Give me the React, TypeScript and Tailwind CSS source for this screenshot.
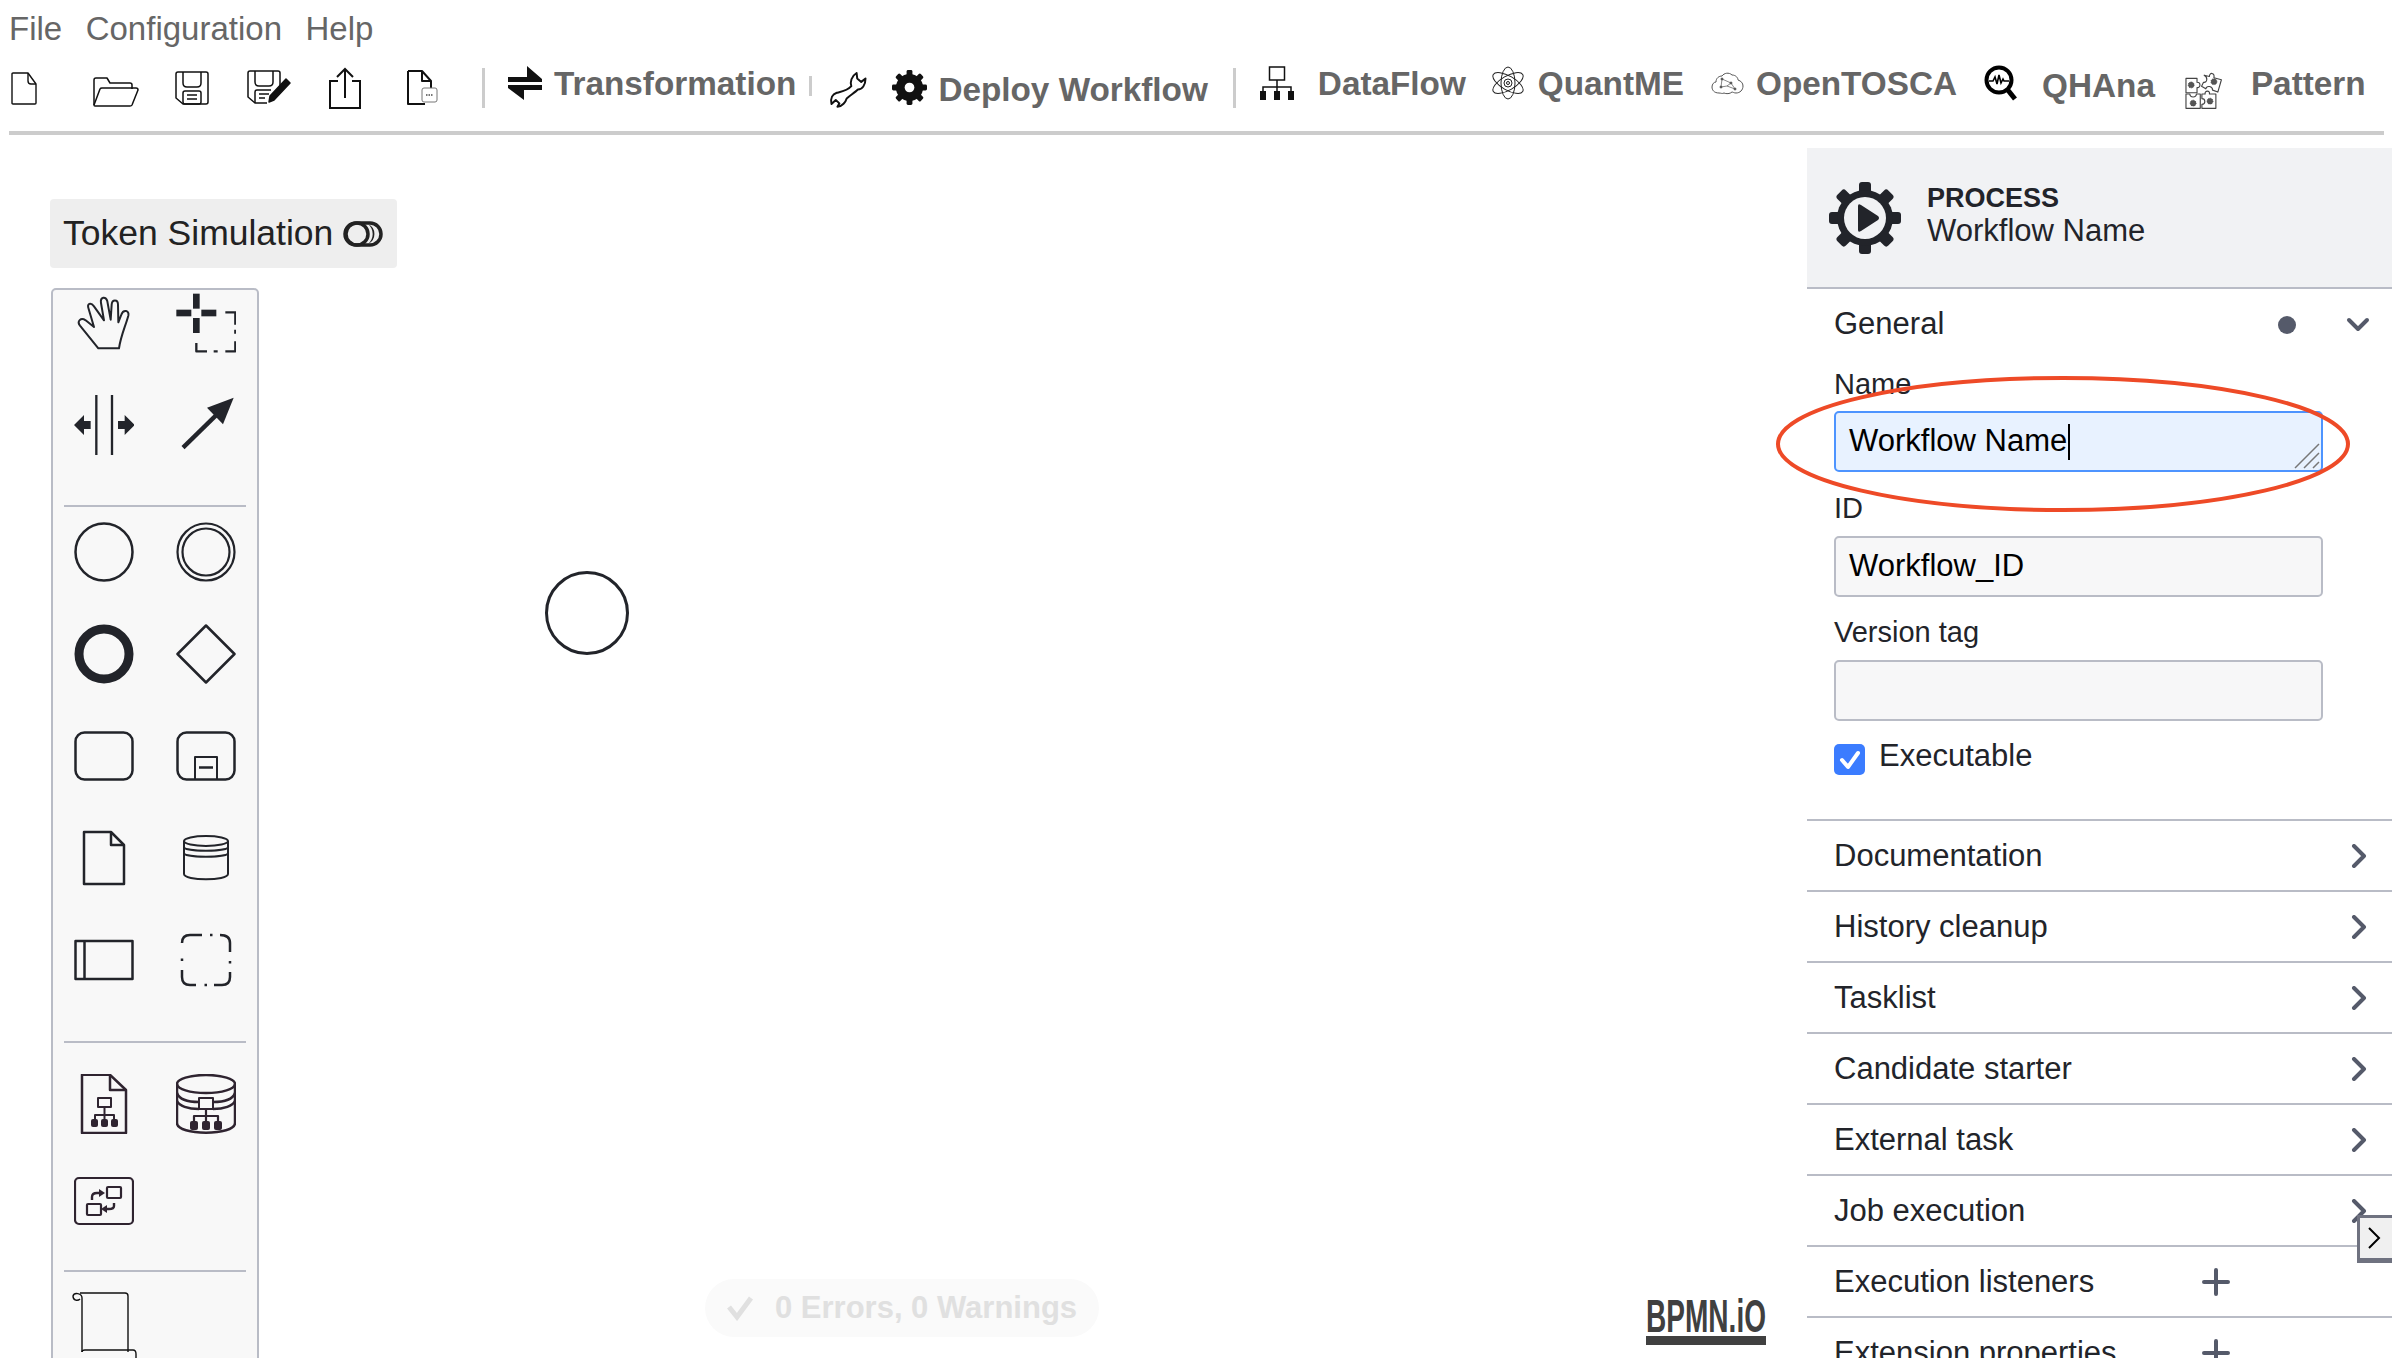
const Gear = ({ size, color, hole, bg, children }: { size: number; color: string; hole: number; bg: string; children?: React.ReactNode }) => (
  <svg width={size} height={size} viewBox="0 0 72 72">
    {[0, 45, 90, 135, 180, 225, 270, 315].map((a) => (
      <rect key={a} x="30" y="0" width="12" height="16" rx="3" fill={color} transform={`rotate(${a} 36 36)`} />
    ))}
    <circle cx="36" cy="36" r="28" fill={color} />
    <circle cx="36" cy="36" r={hole} fill={bg} />
    {children}
  </svg>
)

const stroke = "#22242a"
const dark = "#2f2430"

const Sep = ({ className }: { className: string }) => <div className={`w-[3px] bg-[#cccccc] ${className}`} />

const Tool = ({ className, children }: { className: string; children: React.ReactNode }) => (
  <span className={`text-[33.3px] leading-none font-bold text-[#666666] whitespace-nowrap ${className}`}>{children}</span>
)

const Toolbar = () => (
  <div className="flex items-center h-[64px] pl-[11px]">
    <svg width="26" height="33" viewBox="0 0 26 33" fill="none" stroke="#111" strokeWidth="1.4" strokeLinejoin="round">
      <path d="M1 2q0-1 1-1h15l8 11v19q0 1-1 1H2q-1 0-1-1z" />
      <path d="M17 1v8q0 3 3 3h5" />
    </svg>
    <svg className="ml-[56px] mt-[8px]" width="46" height="30" viewBox="0 0 46 30" fill="none" stroke="#111" strokeWidth="1.5" strokeLinejoin="round">
      <path d="M1 28V3q0-2 2-2h11l3 5h20q2 0 2 2v4" />
      <path d="M1 28l6-16q.5-1 2-1h34q2 0 2 2l-6 15q-.5 1-2 1H2q-1 0-1-1z" />
    </svg>
    <svg className="ml-[36px]" width="34" height="34" viewBox="0 0 34 34" fill="none" stroke="#111" strokeWidth="1.5" strokeLinejoin="round">
      <path d="M1 3q0-2 2-2h28q2 0 2 2v28q0 2-2 2H8l-7-6z" />
      <path d="M8 1v11q0 4 4 4h10q4 0 4-4V1" />
      <rect x="8" y="20" width="18" height="13" rx="2" />
      <path d="M12 24h10M12 28h10" />
    </svg>
    <svg className="ml-[38px]" width="44" height="36" viewBox="0 0 44 36" fill="none" stroke="#111" strokeWidth="1.5" strokeLinejoin="round">
      <path d="M1 3q0-2 2-2h28q2 0 2 2v17M20 33H8l-7-6V3" />
      <path d="M8 1v11q0 4 4 4h10q4 0 4-4V1" />
      <path d="M8 33V22q0-2 2-2h14" />
      <path d="M12 24h10M12 28h6" />
      <path d="M22 32l1-6 16-17 4 4-16 17z" fill="#111" />
    </svg>
    <svg className="ml-[37px]" width="34" height="42" viewBox="0 0 34 42" fill="none" stroke="#111" strokeWidth="2">
      <path d="M10 14H2v27h30V14h-8" />
      <path d="M17 31V2M9 10l8-8 8 8" />
    </svg>
    <svg className="ml-[45px]" width="31" height="36" viewBox="0 0 31 36" fill="none" stroke="#111" strokeWidth="2" strokeLinejoin="round">
      <path d="M1 1h14l9 10v7M18 34H1V1" />
      <path d="M15 1v10h9" />
      <rect x="15" y="18" width="15" height="14" rx="2" fill="#fff" stroke="#777" strokeWidth="1" />
      <path d="M19 25h7" stroke="#777" strokeWidth="2" strokeDasharray="1.5 1" />
    </svg>
    <Sep className="ml-[44px] h-[40px]" />
    <svg className="ml-[23px] mb-[10px]" width="35" height="34" viewBox="0 0 35 34" fill="#111">
      <polygon points="0,11 19,11 19,0 34,13 34,16 0,16" />
      <polygon points="34,19 34,24 16,24 16,34 0,22 0,19" />
    </svg>
    <Tool className="ml-[11px] mb-[8px]">Transformation</Tool>
    <Sep className="ml-[13px] h-[20px] mb-[4px]" />
    <svg className="ml-[17px] mt-[2px]" width="38" height="37" viewBox="25 22 114 112" fill="none" stroke="#111" strokeWidth="6" strokeLinejoin="round">
      <path d="M108 28C92 38 88 55 92 68C80 82 60 85 48 88C35 92 28 105 32 122L45 110L56 120L50 130C65 130 75 115 78 105C90 95 105 85 112 78C125 78 135 65 135 45L122 55L110 45Z" />
    </svg>
    <div className="ml-[25px] flex mt-[-2px]">
      <Gear size={35} color="#111" hole={10} bg="#fff" />
    </div>
    <Tool className="ml-[11px] mt-[4px]">Deploy Workflow</Tool>
    <Sep className="ml-[25px] h-[40px]" />
    <svg className="ml-[24px] mb-[10px]" width="34" height="34" viewBox="0 0 34 34" fill="none" stroke="#111" strokeWidth="1.5">
      <rect x="9.5" y="1" width="15" height="13" />
      <path d="M17 14v7M3 27v-6h28v6M17 21v6" />
      <rect x="0" y="25" width="6" height="9" fill="#111" stroke="none" />
      <rect x="14" y="25" width="6" height="9" fill="#111" stroke="none" />
      <rect x="28" y="25" width="6" height="9" fill="#111" stroke="none" />
    </svg>
    <Tool className="ml-[24px] mb-[8px]">DataFlow</Tool>
    <svg className="ml-[26px] mb-[10px]" width="32" height="34" viewBox="0 0 32 34" fill="none" stroke="#222" strokeWidth="1">
      <ellipse cx="16" cy="17" rx="7" ry="16" />
      <ellipse cx="16" cy="17" rx="7" ry="17" transform="rotate(60 16 17)" />
      <ellipse cx="16" cy="17" rx="7" ry="17" transform="rotate(-60 16 17)" />
      <circle cx="16" cy="17" r="4" />
      <circle cx="16" cy="17" r="1.5" />
    </svg>
    <Tool className="ml-[14px] mb-[8px]">QuantME</Tool>
    <svg className="ml-[27px] mb-[10px]" width="33" height="24" viewBox="0 0 33 24" fill="none" stroke="#555" strokeWidth="1">
      <path d="M8 22C3 22 1 19 1 16c0-3 2-5 4-5 0-4 3-6 6-6 2-3 7-4 10-1 4 0 6 3 6 5 3 1 5 3 5 6 0 4-3 7-7 7-2 0-3-1-4-1-2 2-6 2-8 1-2 1-3 0-5 0z" />
      <path d="M11 8l9 4 4 6M11 8l-1 8 6-1 4-3M16 15l8 3" strokeWidth=".7" />
      <circle cx="11" cy="8" r="1" fill="#555" />
      <circle cx="10" cy="16" r="1" fill="#555" />
      <circle cx="20" cy="12" r="1" fill="#555" />
      <circle cx="24" cy="18" r="1" fill="#555" />
    </svg>
    <Tool className="ml-[12px] mb-[8px]">OpenTOSCA</Tool>
    <svg className="ml-[27px] mb-[10px]" width="34" height="36" viewBox="0 0 34 36" fill="none" stroke="#000">
      <circle cx="15" cy="15" r="12.5" strokeWidth="4" />
      <path d="M23 24l8 10" strokeWidth="5" />
      <path d="M5 16h4l2-4 2 7 2-9 2 8 2-4 1 2h5" strokeWidth="1.6" />
    </svg>
    <Tool className="ml-[24px] mb-[5px]">QHAna</Tool>
    <svg className="ml-[30px] mt-[1px]" width="39" height="42" viewBox="33 18 120 125" fill="none" stroke="#444" strokeWidth="3.5" strokeLinejoin="round">
      <path d="M36 48H70V60C82 58 82 78 70 76V92H36Z" />
      <path d="M36 96H48C48 108 68 108 68 96H80V140H36Z" />
      <path d="M85 96H95C92 84 112 84 108 96H128V140H85V128C97 128 97 110 85 110Z" />
      <path d="M92 38L108 42C108 28 125 30 122 46L145 52L134 90L118 84C118 72 100 68 97 80L84 72L90 60C102 62 104 44 92 38Z" />
      <g fill="#555" strokeWidth="3" strokeDasharray="3 3">
        <circle cx="52" cy="68" r="9" />
        <circle cx="58" cy="124" r="9" />
        <circle cx="110" cy="118" r="9" />
        <circle cx="122" cy="58" r="9" />
      </g>
    </svg>
    <Tool className="ml-[27px] mb-[8px]">Pattern</Tool>
  </div>
)

const PaletteIcon = ({ box, children }: { box?: string; children: React.ReactNode }) => (
  <div className="flex items-center justify-center h-[60px]">
    <svg width="60" height="60" viewBox={box || "0 0 60 60"} fill="none" stroke={stroke} strokeWidth={box ? 6 : 2.5} strokeLinejoin="round">
      {children}
    </svg>
  </div>
)

const Palette = () => (
  <div className="w-[208px] mt-[20px] ml-[1px] border-2 border-[#b9bcc6] rounded-[5px] bg-[#f8f8f8] pb-[60px]">
    <div className="grid grid-cols-[102px_102px] gap-y-[42px] pt-[3px]">
      <PaletteIcon box="130 310 180 180">
        <path d="M203 476H265C270 440 284 410 293 378C297 362 278 358 272 375L263 398L262 345C262 328 244 328 243 345L240 390L230 335C226 318 208 322 211 340L220 392L190 350C180 336 168 342 174 358L190 412L165 392C150 382 138 395 148 408Z" />
      </PaletteIcon>
      <PaletteIcon box="437 310 180 180">
        <g fill={stroke} stroke="none">
          <rect x="488" y="312" width="20" height="45" />
          <rect x="488" y="385" width="20" height="45" />
          <rect x="438" y="360" width="45" height="20" />
          <rect x="513" y="360" width="45" height="20" />
        </g>
        <path d="M585 368H615V405M615 420V432M615 455V485H585M562 485H550M530 485H498V460" strokeWidth="7" />
      </PaletteIcon>
      <PaletteIcon box="130 617 180 180">
        <path d="M197 617V797M244 617V797" strokeWidth="7" />
        <g fill={stroke} stroke="none">
          <polygon points="130,707 160,677 160,695 180,695 180,719 160,719 160,737" />
          <polygon points="312,707 282,677 282,695 262,695 262,719 282,719 282,737" />
        </g>
      </PaletteIcon>
      <PaletteIcon box="437 617 180 180">
        <path d="M458 775L560 675" strokeWidth="13" />
        <polygon points="610,625 530,655 578,705" fill={stroke} stroke="none" />
      </PaletteIcon>
    </div>
    <div className="mx-[11px] mt-[50px] h-[2px] bg-[#b9bcc6]" />
    <div className="grid grid-cols-[102px_102px] gap-y-[42px] mt-[15px]">
      <PaletteIcon><circle cx="30" cy="30" r="28.5" /></PaletteIcon>
      <PaletteIcon>
        <circle cx="30" cy="30" r="28.5" strokeWidth="2.2" />
        <circle cx="30" cy="30" r="23.5" strokeWidth="2.2" />
      </PaletteIcon>
      <PaletteIcon><circle cx="30" cy="30" r="25" strokeWidth="9" /></PaletteIcon>
      <PaletteIcon><polygon points="30,1.5 58.5,30 30,58.5 1.5,30" /></PaletteIcon>
      <PaletteIcon><rect x="1.5" y="6.5" width="57" height="47" rx="9" /></PaletteIcon>
      <PaletteIcon>
        <rect x="1.5" y="6.5" width="57" height="47" rx="9" />
        <path d="M19 53V31h22v22" strokeWidth="2" />
        <path d="M23 41.5h14" strokeWidth="2.5" />
      </PaletteIcon>
      <PaletteIcon>
        <path d="M10 4H37L50 17V56H10Z" />
        <path d="M37 4V17H50" />
      </PaletteIcon>
      <PaletteIcon>
        <ellipse cx="30" cy="13" rx="22" ry="5" strokeWidth="2" />
        <path d="M8 13V46C8 53 52 53 52 46V13M8 19C8 24 52 24 52 19M8 25C8 30 52 30 52 25" strokeWidth="2" />
      </PaletteIcon>
      <PaletteIcon>
        <path d="M1.5 11H58.5V49H1.5ZM10.5 11V49" />
      </PaletteIcon>
      <PaletteIcon>
        <path d="M6 13Q6 5 14 5H26M34 5H36.5M44 5Q54 5 54 13V22M54 31V33.5M54 42V47Q54 55 46 55H38M31 55H28.5M20 55H14Q6 55 6 47V40M6 31V28.5" />
      </PaletteIcon>
    </div>
    <div className="mx-[11px] mt-[51px] h-[2px] bg-[#b9bcc6]" />
    <div className="grid grid-cols-[102px_102px] gap-y-[37px] mt-[31px]">
      <PaletteIcon>
        <g stroke={dark}>
          <path d="M8 .8H36L52 16V59H8Z" />
          <path d="M36 1V16H52" />
          <rect x="24" y="24" width="13" height="9" strokeWidth="2" />
          <path d="M30.5 33V41M21 47V41H40V47M30.5 41V47" strokeWidth="2" />
        </g>
        <g fill={dark} stroke="none">
          <rect x="17" y="45" width="7" height="8" rx="2" />
          <rect x="27" y="45" width="7" height="8" rx="2" />
          <rect x="37" y="45" width="7" height="8" rx="2" />
        </g>
      </PaletteIcon>
      <PaletteIcon>
        <g stroke={dark}>
          <ellipse cx="30" cy="10" rx="29" ry="9" />
          <path d="M1 10V49C1 62 59 62 59 49V10" />
          <path d="M1 19C3 25 12 28 23 28M37 28C48 28 57 25 59 19M1 27C3 32 12 35 23 35M37 35C48 35 57 32 59 27" />
          <rect x="23" y="24" width="14" height="11" fill="#f8f8f8" strokeWidth="2" />
          <path d="M30 35V42M18 48V42H42V48M30 42V48" strokeWidth="2.2" />
        </g>
        <g fill={dark} stroke="none">
          <rect x="14" y="47" width="8" height="9" rx="2" />
          <rect x="26" y="47" width="8" height="9" rx="2" />
          <rect x="38" y="47" width="8" height="9" rx="2" />
        </g>
      </PaletteIcon>
      <PaletteIcon>
        <g stroke={dark} strokeWidth="2.2">
          <rect x="1" y="7" width="58" height="46" rx="4" />
          <rect x="33" y="16" width="14" height="11" rx="1" />
          <rect x="13" y="33" width="14" height="11" rx="1" />
          <path d="M18 29V26Q18 22 23 22H26" strokeWidth="2.4" />
          <path d="M40 32V35Q40 38 35 38H32" strokeWidth="2.4" />
        </g>
        <g fill={dark} stroke="none">
          <polygon points="25,18 31,22 25,26" />
          <polygon points="33,34 27,38 33,42" />
        </g>
      </PaletteIcon>
      <div />
    </div>
    <div className="mx-[11px] mt-[39px] h-[2px] bg-[#b9bcc6]" />
    <svg className="ml-[18px] mt-[20px]" width="68" height="68" viewBox="0 0 68 68" fill="none" stroke="#111" strokeWidth="1.4">
      <path d="M9 1H54Q57 1 57 4V60M11 60V6C11 1 3 0 2 4 2 9 7 9 9 7" />
      <path d="M11 60Q11 58 14 58H62Q65 58 65 62V68" />
    </svg>
  </div>
)

const Field = ({ label, className, value }: { label: string; className: string; value: string }) => (
  <div className={`pl-[27px] ${className}`}>
    <div className="h-[36px] flex items-center text-[29px] text-[#22242a]">{label}</div>
    <div className="mt-[9px] w-[489px] h-[61px] flex items-center pl-[13px] text-[31px] text-black bg-[#f7f7f8] border-2 border-[#b9bcc6] rounded-[5px]">
      {value}
    </div>
  </div>
)

const Row = ({ title }: { title: string }) => (
  <div className="h-[71px] border-t-2 border-[#b9bcc6] flex items-center justify-between pl-[27px] pr-[25px] text-[31px] text-[#22242a]">
    <span className="mt-[2px]">{title}</span>
    <svg width="16" height="24" viewBox="0 0 16 24" fill="none" stroke="#555a6a" strokeWidth="4" strokeLinecap="round" strokeLinejoin="round">
      <path d="M3 2l10 10L3 22" />
    </svg>
  </div>
)

const PlusRow = ({ title }: { title: string }) => (
  <div className="h-[71px] border-t-2 border-[#b9bcc6] flex items-center pl-[27px] text-[31px] text-[#22242a] whitespace-nowrap">
    <span className="w-[368px] mt-[2px]">{title}</span>
    <svg width="28" height="28" viewBox="0 0 28 28" fill="none" stroke="#555a6a" strokeWidth="4" strokeLinecap="round">
      <path d="M14 2v24M2 14h24" />
    </svg>
  </div>
)

const Panel = () => (
  <div className="w-[585px] mt-[13px] relative">
    <div className="h-[141px] bg-[#f1f2f4] border-b-2 border-[#b9bcc6] flex items-center pl-[22px]">
      <Gear size={72} color={stroke} hole={21} bg="#f1f2f4">
        <path d="M29 24Q29 21 32 23L49 34Q51 36 49 38L32 49Q29 51 29 48Z" fill={stroke} />
      </Gear>
      <div className="ml-[26px] mb-[5px] text-[#22242a]">
        <div className="text-[27px] leading-[32px] font-bold">PROCESS</div>
        <div className="text-[31px] leading-[34px]">Workflow Name</div>
      </div>
    </div>
    <div className="h-[71px] flex items-center pl-[27px] text-[31px] text-[#22242a]">
      <span className="flex-1">General</span>
      <div className="w-[18px] h-[18px] rounded-full bg-[#555a6a] mr-[50px]" />
      <svg className="mr-[22px]" width="24" height="16" viewBox="0 0 24 16" fill="none" stroke="#555a6a" strokeWidth="4" strokeLinecap="round" strokeLinejoin="round">
        <path d="M3 3l9 9 9-9" />
      </svg>
    </div>
    <div className="pl-[27px] mt-[7px]">
      <div className="h-[36px] flex items-center text-[29px] text-[#22242a]">Name</div>
      <div className="relative mt-[8px] w-[489px] h-[61px] flex items-center pl-[13px] text-[31px] text-black bg-[#e8f2ff] border-2 border-[#4d94ff] rounded-[5px]">
        Workflow Name
        <div className="w-[2px] h-[36px] bg-black ml-[1px]" />
        <svg className="absolute right-[1px] bottom-[1px]" width="26" height="26" viewBox="0 0 26 26" stroke="#777" strokeWidth="1.5">
          <path d="M1 25L25 1M10 25L25 10M19 25L25 19" />
        </svg>
      </div>
    </div>
    <Field label="ID" className="mt-[19px]" value="Workflow_ID" />
    <Field label="Version tag" className="mt-[18px]" value="" />
    <div className="pl-[27px] mt-[23px] flex items-start">
      <div className="w-[31px] h-[31px] rounded-[5px] bg-[#3b7cff] flex items-center justify-center">
        <svg width="22" height="20" viewBox="0 0 22 20" fill="none" stroke="#fff" strokeWidth="4" strokeLinecap="round" strokeLinejoin="round">
          <path d="M3 10l6 7L19 3" />
        </svg>
      </div>
      <span className="ml-[14px] mt-[-4px] text-[31px] leading-[31px] text-[#22242a]">Executable</span>
    </div>
    <div className="mt-[44px]">
      {["Documentation", "History cleanup", "Tasklist", "Candidate starter", "External task", "Job execution"].map((t) => (
        <Row key={t} title={t} />
      ))}
      <PlusRow title="Execution listeners" />
      <PlusRow title="Extension properties" />
    </div>
    <div className="absolute right-0 top-[1067px] w-[35px] h-[48px] pr-[4px] bg-[#f0f0f0] border-t-[3px] border-l-[3px] border-b-[5px] border-[#6f7280] flex items-center justify-center">
      <svg width="14" height="24" viewBox="0 0 14 24" fill="none" stroke="#000" strokeWidth="2">
        <path d="M2 2l10 10L2 22" />
      </svg>
    </div>
  </div>
)

export default function App() {
  return (
    <div className="relative h-[1358px] overflow-hidden bg-white font-['Liberation_Sans',Arial,sans-serif]">
      <div className="flex items-center h-[56px] pt-[2px] pl-[9px] gap-[23.5px] text-[33px] text-[#666666]">
        <span>File</span>
        <span>Configuration</span>
        <span>Help</span>
      </div>
      <Toolbar />
      <div className="mt-[11px] ml-[9px] mr-[8px] h-[4px] bg-[#cccccc]" />
      <div className="flex">
        <div className="relative flex-1 pl-[50px] pt-[64px]">
          <div className="flex items-center w-[347px] h-[69px] pl-[13px] bg-[#eeeeee] rounded-[4px] text-[35.5px] text-[#222222]">
            Token Simulation
            <svg className="ml-[10px]" width="40" height="26" viewBox="0 0 40 26" fill="none" stroke="#222" strokeWidth="3.5">
              <rect x="2" y="2" width="36" height="22" rx="11" />
              <circle cx="14" cy="13" r="11" />
              <path d="M25 3a11 11 0 0 1 0 20a13 13 0 0 0 0-20" fill="#222" stroke="none" />
            </svg>
          </div>
          <Palette />
          <svg className="absolute left-[544px] top-[435px]" width="86" height="86" viewBox="0 0 86 86" fill="none" stroke={stroke} strokeWidth="3">
            <circle cx="43" cy="43" r="40.5" />
          </svg>
          <div className="absolute left-[705px] top-[1144px] w-[394px] h-[58px] rounded-full bg-[#fafafa] flex items-center pl-[21px] text-[31px] font-bold text-[#e0e0e0]">
            <svg width="28" height="26" viewBox="0 0 28 26" fill="none" stroke="#e0e0e0" strokeWidth="5">
              <path d="M3 12l8 10L25 3" />
            </svg>
            <span className="ml-[21px]">0 Errors, 0 Warnings</span>
          </div>
          <svg className="absolute left-[1646px] top-[1163px]" width="120" height="48" viewBox="0 0 120 48" fill="#404040">
            <text x="0" y="34" fontSize="46" fontWeight="700" textLength="120" lengthAdjust="spacingAndGlyphs">BPMN.iO</text>
            <rect x="0" y="38" width="120" height="9" />
          </svg>
        </div>
        <Panel />
      </div>
      <svg className="absolute left-[1775px] top-[373px]" width="577" height="142" viewBox="0 0 577 142" fill="none" stroke="#ee4a27" strokeWidth="4">
        <ellipse cx="288" cy="71" rx="285" ry="66" />
      </svg>
    </div>
  )
}
